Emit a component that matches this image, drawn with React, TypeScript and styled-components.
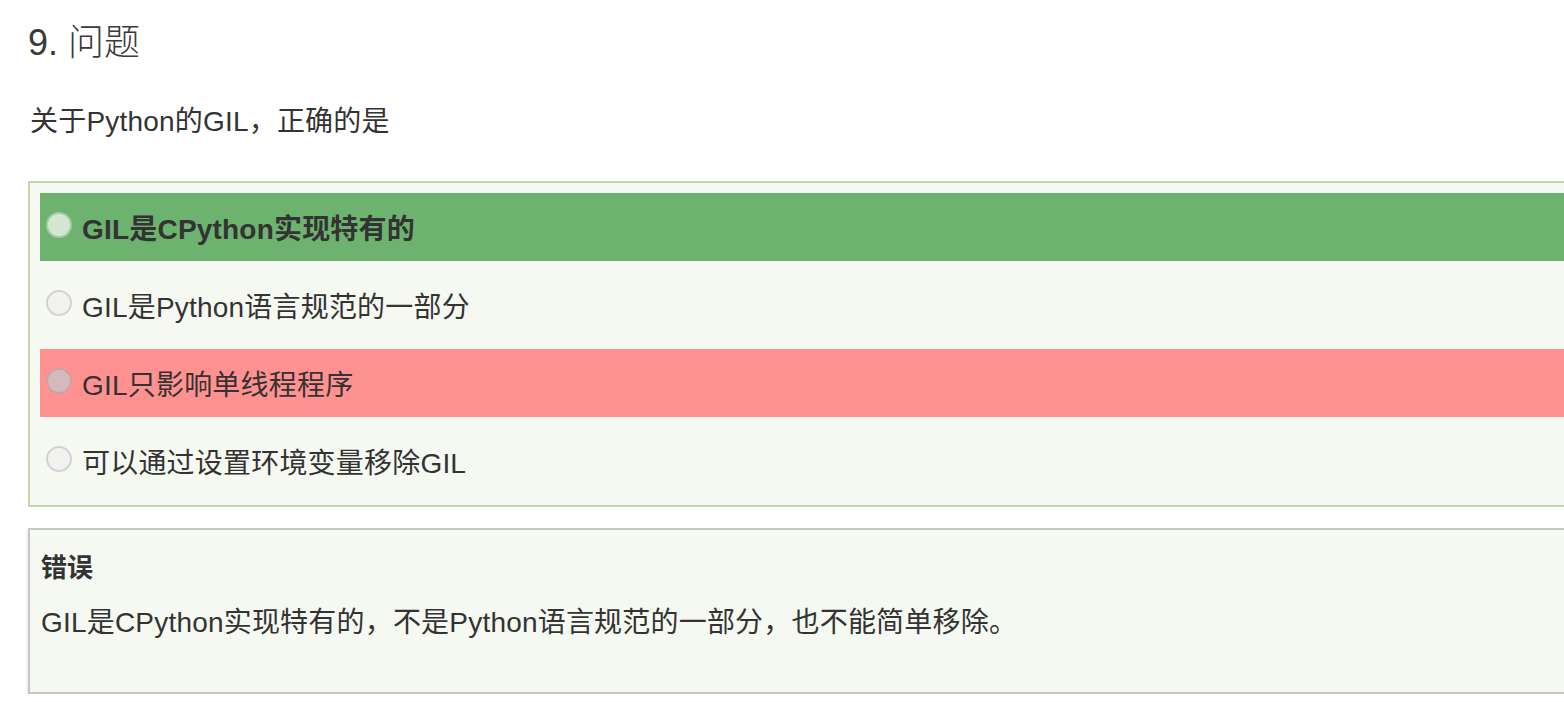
import React from 'react'
import styled, { createGlobalStyle } from 'styled-components'

const GlobalStyle = createGlobalStyle`
    html, body {
        margin: 0;
        padding: 0;
        background: #fff;
        overflow: hidden;
    }
    body {
        font-family: "Liberation Sans", "Noto Sans CJK SC", sans-serif;
        color: #333;
    }
`;

const Page = styled.div`
    width: 1640px;
    padding: 20px 0 0 28px;
`;

const Heading = styled.h2`
    margin: 0;
    font-size: 36px;
    font-weight: 300;
    line-height: 46px;
    color: #3a3a3a;
`;

const Question = styled.p`
    margin: 36px 0 0 2px;
    font-size: 28px;
    line-height: 40px;
    letter-spacing: 0.2px;
`;

const Options = styled.div`
    margin-top: 39px;
    display: flex;
    flex-direction: column;
    gap: 10px;
    padding: 10px;
    border: 2px solid #c6d4a8;
    background: #f6f8f2;
`;

type Mark = 'correct' | 'wrong' | 'none';

const rowBg: Record<Mark, string> = {
    correct: '#6db36f',
    wrong: '#ff9191',
    none: 'transparent',
};

const Row = styled.label<{ $mark: Mark }>`
    display: flex;
    align-items: center;
    gap: 10px;
    height: 68px;
    padding-left: 6px;
    background: ${props => rowBg[props.$mark]};
    font-size: 28px;
    letter-spacing: 0.2px;
    font-weight: ${props => (props.$mark === 'correct' ? 700 : 400)};
    color: #333;
`;

const radioFill: Record<Mark, [string, string]> = {
    correct: ['#d4e7d3', '#a9c9a8'],
    wrong: ['#d6b9bb', '#c9a3a5'],
    none: ['#f1f1f0', '#d2d2d2'],
};

const Radio = styled.span<{ $mark: Mark }>`
    flex: none;
    width: 22px;
    height: 22px;
    margin-top: -4px;
    border-radius: 50%;
    background: ${props => radioFill[props.$mark][0]};
    border: 2px solid ${props => radioFill[props.$mark][1]};
`;

const Feedback = styled.div`
    margin-top: 21px;
    padding: 20px 11px 51px;
    border: 2px solid #c6c6c6;
    background: #f6f8f2;
    box-shadow: 0 2px 3px rgba(0, 0, 0, 0.18);
`;

const FeedbackTitle = styled.div`
    font-size: 26px;
    font-weight: 700;
    line-height: 36px;
`;

const FeedbackText = styled.div`
    margin-top: 19px;
    font-size: 28px;
    letter-spacing: 0.2px;
    line-height: 36px;
`;

const options: { text: string; mark: Mark }[] = [
    { text: 'GIL是CPython实现特有的', mark: 'correct' },
    { text: 'GIL是Python语言规范的一部分', mark: 'none' },
    { text: 'GIL只影响单线程程序', mark: 'wrong' },
    { text: '可以通过设置环境变量移除GIL', mark: 'none' },
];

const App: React.FC = () => (
    <>
        <GlobalStyle />
        <Page>
            <Heading>9. 问题</Heading>
            <Question>关于Python的GIL，正确的是</Question>
            <Options>
                {options.map((o, i) => (
                    <Row key={i} $mark={o.mark}>
                        <Radio $mark={o.mark} />
                        {o.text}
                    </Row>
                ))}
            </Options>
            <Feedback>
                <FeedbackTitle>错误</FeedbackTitle>
                <FeedbackText>GIL是CPython实现特有的，不是Python语言规范的一部分，也不能简单移除。</FeedbackText>
            </Feedback>
        </Page>
    </>
)

export default App
